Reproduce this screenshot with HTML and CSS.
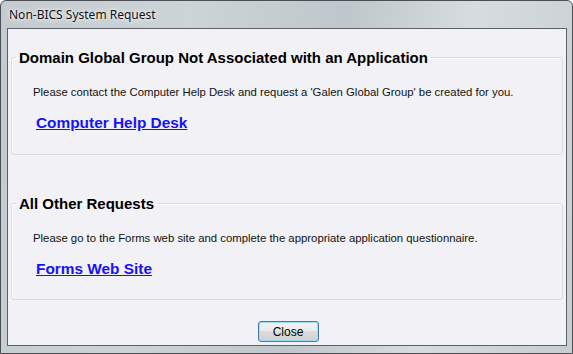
FILE: index.html
```html
<!DOCTYPE html>
<html>
<head>
<meta charset="utf-8">
<link rel="stylesheet" href="styles.css">
</head>
<body>
<div class="window">
  <div class="titlebar">Non-BICS System Request</div>
  <div class="client">
    <fieldset class="group group-first">
      <legend>Domain Global Group Not Associated with an Application</legend>
      <div class="group-body">
        <p class="info">Please contact the Computer Help Desk and request a 'Galen Global Group' be created for you.</p>
        <a class="link" href="#">Computer Help Desk</a>
      </div>
    </fieldset>
    <fieldset class="group group-second">
      <legend>All Other Requests</legend>
      <div class="group-body">
        <p class="info">Please go to the Forms web site and complete the appropriate application questionnaire.</p>
        <a class="link" href="#">Forms Web Site</a>
      </div>
    </fieldset>
    <div class="actions">
      <button class="btn">Close</button>
    </div>
  </div>
</div>
</body>
</html>
```
FILE: styles.css
```css
html, body {
  margin: 0;
  padding: 0;
  background: #ffffff;
}
body {
  width: 573px;
  height: 354px;
  overflow: hidden;
  font-family: "Liberation Sans", Arial, sans-serif;
}
.window {
  box-sizing: border-box;
  width: 573px;
  height: 354px;
  border: 1px solid #4b4f53;
  border-radius: 6px 6px 0 0;
  background: linear-gradient(100deg, #c4cbd0 0%, #cdd4d8 30%, #bfc7cc 55%, #d6dcdf 75%, #c7ced3 100%);
  display: flex;
  flex-direction: column;
  padding: 0 5px 7px 6px;
}
.titlebar {
  height: 27px;
  box-sizing: border-box;
  padding: 5px 0 0 2px;
  font-family: "Noto Sans", "Open Sans", sans-serif;
  font-size: 12px;
  color: #111;
  text-shadow: 0 0 6px rgba(255,255,255,0.9), 0 0 3px rgba(255,255,255,0.9);
}
.client {
  flex: 1;
  border: 1px solid #5d6166;
  background: #f2f1f5;
  display: flex;
  flex-direction: column;
  padding: 0 3px;
}
.group {
  margin: 0;
  padding: 0;
  border: 1px solid #d9dde2;
  border-radius: 3px;
  box-shadow: inset 1px 1px 0 #ffffff;
  box-sizing: border-box;
}
.group legend {
  margin-left: 4px;
  padding: 0 3px;
  font-size: 15px;
  font-weight: bold;
  line-height: 15px;
  color: #000;
}
.group-body {
  padding-left: 21px;
}
.group-first {
  margin-top: 21px;
  height: 105px;
}
.group-second {
  margin-top: 41px;
  height: 104px;
}
.info {
  margin: 21px 0 0 0;
  font-size: 11.35px;
  line-height: 13px;
  color: #111;
}
.link {
  display: inline-block;
  margin: 15px 0 0 3px;
  font-size: 15.4px;
  line-height: 17px;
  font-weight: bold;
  color: #1414f5;
  text-decoration: underline;
}
.actions {
  display: flex;
  justify-content: center;
  padding-top: 21px;
}
.btn {
  width: 61px;
  height: 21px;
  margin-left: 2px;
  box-sizing: border-box;
  border: 1px solid #3d7bad;
  border-radius: 3px;
  background: linear-gradient(#f2f2f2 0%, #ebebeb 45%, #dddddd 50%, #cfcfcf 100%);
  box-shadow: inset 0 0 0 1px #9fdcf5;
  font-family: "Liberation Sans", Arial, sans-serif;
  font-size: 12px;
  color: #000;
  padding: 0;
}
```
